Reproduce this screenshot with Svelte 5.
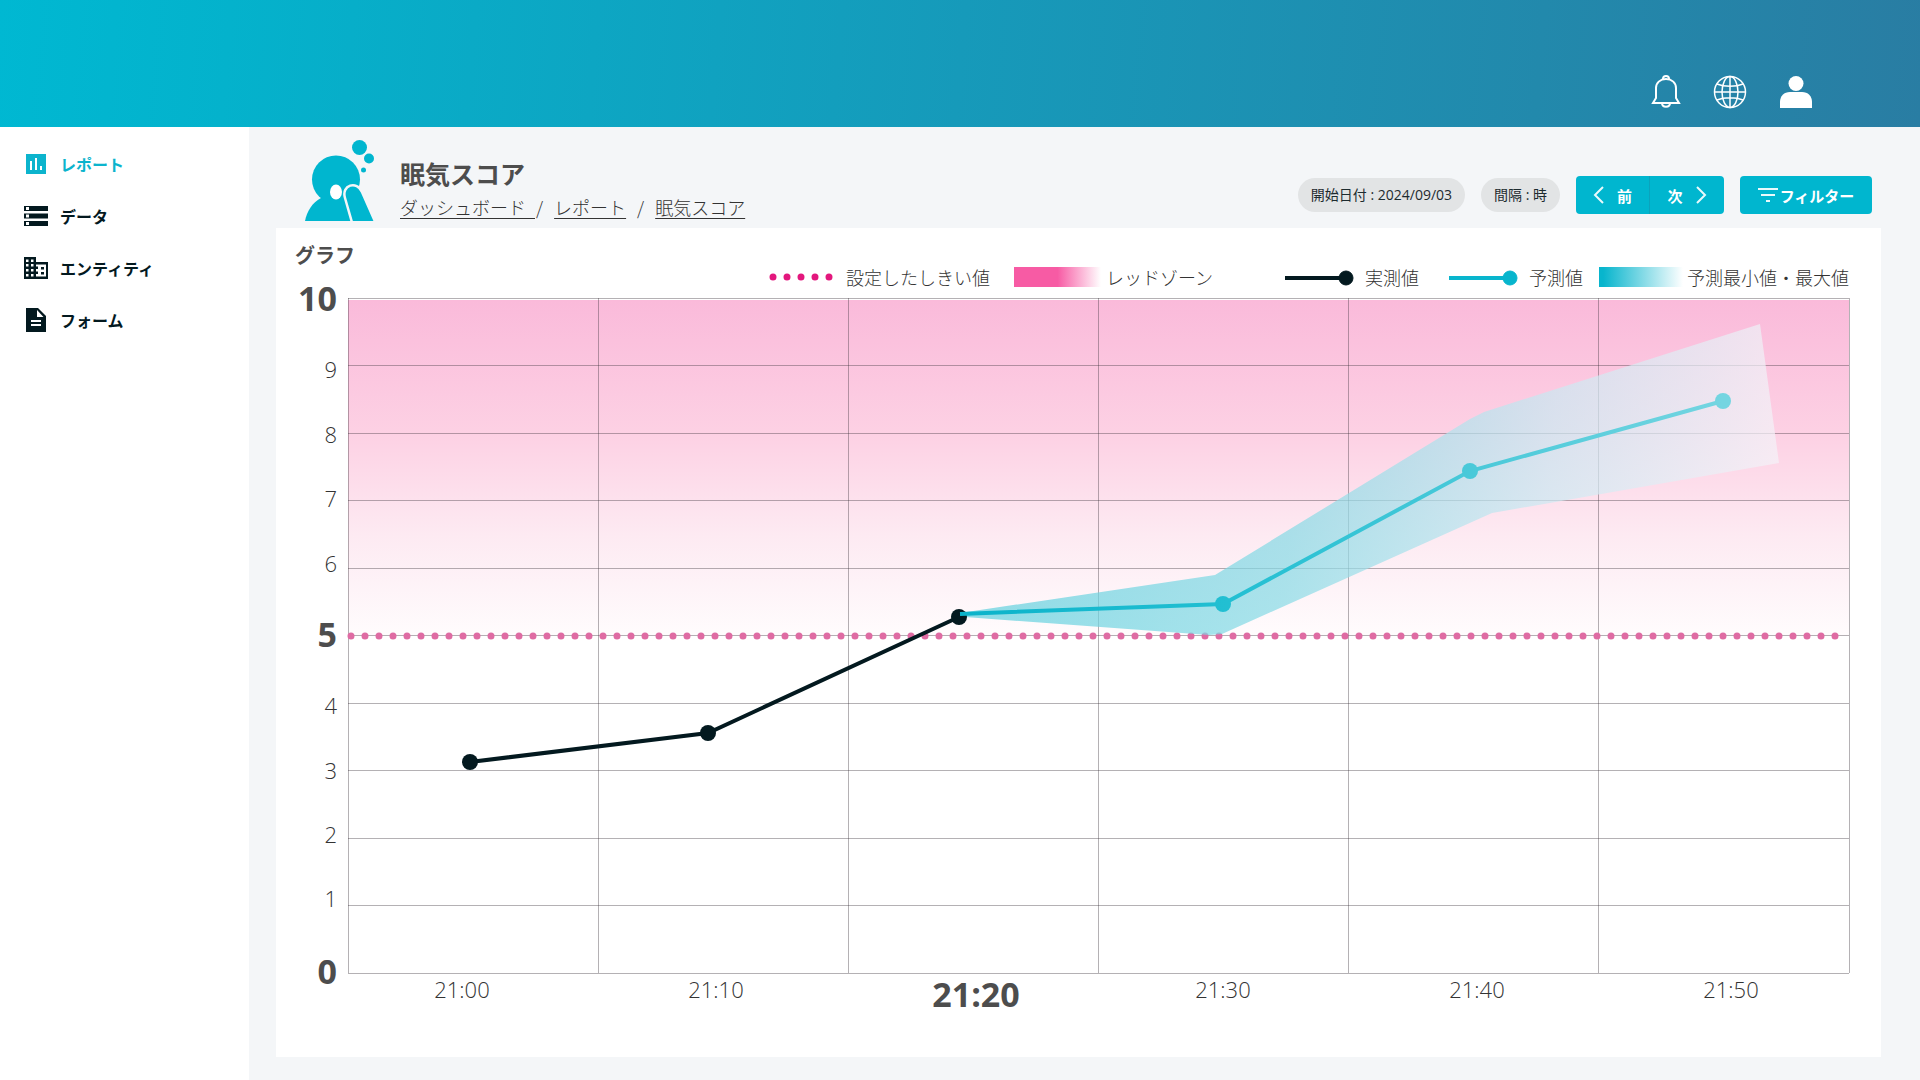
<script>
  const menu = [
    { label: 'レポート', icon: 'report', active: true },
    { label: 'データ', icon: 'data' },
    { label: 'エンティティ', icon: 'entity' },
    { label: 'フォーム', icon: 'form' },
  ];

  const icons = {
    report: 'M2 2h20v20H2zM6 9v9h2V9zm5-3v12h2V6zm5 8v4h2v-4z',
    data: 'M0 17h24v5H0zm2 1v3h3v-3zM0 2h24v5H0zm2 1v3h3V3zm-2 6.500h24v5H0zm2 1v3h3v-3z',
    entity:
      'M12 6V1H0v22h24V6zM4.500 20.500H2v-2.500h2.500zm0-5H2V13h2.500zm0-5H2V8h2.500zm0-4.500H2V3.500h2.500zm5 14.500H7v-2.500h2.500zm0-5H7V13h2.500zm0-5H7V8h2.500zm0-4.500H7V3.500h2.500zM22 20.500H12v-2.500h2v-2.500h-2V13h2v-2.500h-2V8.500h10zM20 11h-3v2.500h3zm0 5h-3v2.500h3z',
    form: 'M14 0H2v24h20V8zm3 18H7v-2h10zm0-4H7v-2h10zm-4-5V2l6.500 7z',
  };

  // plot area inside the svg
  const left = 72;
  const right = 1573;
  const top = 8;
  const bottom = 683;

  const rows = Array.from({ length: 11 }, (_, i) => Math.floor(top + (i * (bottom - top)) / 10) + 0.5);
  const cols = Array.from({ length: 7 }, (_, i) => Math.floor(left + (i * (right - left)) / 6) + 0.5);

  const yLabels = [
    { text: '10', y: 21, strong: true },
    { text: '9', y: 88 },
    { text: '8', y: 153 },
    { text: '7', y: 217 },
    { text: '6', y: 282 },
    { text: '5', y: 357, strong: true },
    { text: '4', y: 424 },
    { text: '3', y: 489 },
    { text: '2', y: 553 },
    { text: '1', y: 617 },
    { text: '0', y: 694, strong: true },
  ];

  const xLabels = [
    { text: '21:00', x: 186 },
    { text: '21:10', x: 440 },
    { text: '21:20', x: 700, strong: true },
    { text: '21:30', x: 947 },
    { text: '21:40', x: 1201 },
    { text: '21:50', x: 1455 },
  ];

  const measured = [[194, 472], [432, 443], [683, 327]];
  const predicted = [[947, 314], [1194, 181], [1447, 111]];
  const range = '684,323 939,285 1194,129 1208,122 1484,34 1503,173 1216,223 946,344 933,345 689,327';

  const toPoints = (list) => list.map((p) => p.join(',')).join(' ');
</script>

<div class="page">
  <header class="topbar">
    <button class="icon-button" aria-label="通知">
      <svg width="30" height="34" viewBox="1 0 30 34" fill="none" stroke="currentColor" stroke-width="2">
        <path d="M3 28h26l-3-5V13c0-5-4-9-10-9S6 8 6 13v10z" />
        <path d="M13 4c0-4 6-4 6 0M12 28c0 5 8 5 8 0" />
      </svg>
    </button>
    <button class="icon-button" aria-label="言語">
      <svg width="34" height="34" viewBox="0 0 34 34" fill="none" stroke="currentColor" stroke-width="1.500">
        <circle cx="17" cy="17" r="15.500" />
        <ellipse cx="17" cy="17" rx="8" ry="15.500" />
        <path d="M17 1v32M1 17h32M4 9c7 3 19 3 26 0M4 25c7-3 19-3 26 0" />
      </svg>
    </button>
    <button class="icon-button" aria-label="アカウント">
      <svg width="34" height="34" viewBox="0 0 34 34" fill="currentColor">
        <circle cx="17" cy="8.500" r="7.500" />
        <path d="M1 33v-6c0-6 4-10 10-10h12c6 0 10 4 10 10v6z" />
      </svg>
    </button>
  </header>

  <div class="body">
    <nav class="sidebar">
      {#each menu as item}
        <a href="#{item.icon}" class="menu-item" class:active={item.active}>
          <svg width="24" height="24" viewBox="0 0 24 24" fill="currentColor" fill-rule="evenodd">
            <path d={icons[item.icon]} />
          </svg>
          {item.label}
        </a>
      {/each}
    </nav>

    <main class="content">
      <div class="heading">
        <svg class="emblem" width="70" height="82" viewBox="0 0 70 82" fill="#00b6cf">
          <circle cx="54.500" cy="8.500" r="7.500" />
          <circle cx="64" cy="19.500" r="5" />
          <circle cx="58.500" cy="31" r="2.500" />
          <circle cx="31" cy="40.500" r="24" />
          <path d="M0 82c2-10 7-18 16-23h30l10 23z" />
          <path d="M48 87L40 59C36 46 52 41 57 53L72 87" stroke="#f4f6f8" stroke-width="2.500" />
          <ellipse cx="31" cy="53" rx="6" ry="7.500" fill="#fff" />
        </svg>
        <div class="titles">
          <h1>眠気スコア</h1>
          <div class="crumbs">
            <a href="#dashboard">ダッシュボード&ensp;</a><span>/</span>
            <a href="#report">レポート</a><span>/</span>
            <a href="#score">眠気スコア</a>
          </div>
        </div>

        <div class="controls">
          <span class="pill">開始日付 : 2024/09/03</span>
          <span class="pill">間隔 : 時</span>
          <div class="pager">
            <button>
              <svg width="12" height="20" viewBox="0 0 12 20"><path d="M10 2L2 10l8 8" /></svg>
              前
            </button>
            <button>
              次
              <svg width="12" height="20" viewBox="0 0 12 20"><path d="M2 2l8 8-8 8" /></svg>
            </button>
          </div>
          <button class="filter">
            <svg width="20" height="14" viewBox="0 0 20 14"><path d="M0 1h20M3 7h14M8 13h4" /></svg>
            フィルター
          </button>
        </div>
      </div>

      <section class="card">
        <div class="card-head">
          <h2>グラフ</h2>
          <ul class="legend">
            <li class="threshold">
              <svg width="66" height="20" viewBox="0 0 66 20">
                <path d="M5 10h57" stroke="#e3177d" stroke-width="7" stroke-linecap="round" stroke-dasharray="0 14" />
              </svg>
              設定したしきい値
            </li>
            <li class="zone"><i class="swatch pink"></i>レッドゾーン</li>
            <li class="actual">
              <svg width="70" height="20" viewBox="0 0 70 20" fill="#03191f" stroke="#03191f">
                <path d="M0 11h62" stroke-width="4" />
                <circle cx="61" cy="11" r="7" />
              </svg>
              実測値
            </li>
            <li class="forecast">
              <svg width="70" height="20" viewBox="0 0 70 20" fill="#08b5cd" stroke="#08b5cd">
                <path d="M0 11h62" stroke-width="4" />
                <circle cx="61" cy="11" r="7" />
              </svg>
              予測値
            </li>
            <li class="minmax"><i class="swatch teal"></i>予測最小値・最大値</li>
          </ul>
        </div>

        <svg class="chart" viewBox="0 0 1605 767">
          <defs>
            <linearGradient id="red-zone" x1="0" y1="0" x2="0" y2="1">
              <stop offset="0" stop-color="#fabada" />
              <stop offset="0.400" stop-color="#fdd1e4" />
              <stop offset="0.700" stop-color="#fdeaf2" />
              <stop offset="1" stop-color="#fffcfd" />
            </linearGradient>
            <linearGradient id="range" gradientUnits="userSpaceOnUse" x1="684" y1="230" x2="1503" y2="330">
              <stop offset="0" stop-color="#5ccfdd" stop-opacity="0.700" />
              <stop offset="0.400" stop-color="#86dae5" stop-opacity="0.700" />
              <stop offset="0.700" stop-color="#cae9f2" stop-opacity="0.700" />
              <stop offset="1" stop-color="#f8f4f9" stop-opacity="0.700" />
            </linearGradient>
            <linearGradient id="forecast" gradientUnits="userSpaceOnUse" x1="684" y1="0" x2="1447" y2="0">
              <stop offset="0" stop-color="#0bb3ca" />
              <stop offset="0.350" stop-color="#22bfd2" />
              <stop offset="0.670" stop-color="#49c9d9" />
              <stop offset="1" stop-color="#74d5e1" />
            </linearGradient>
          </defs>

          <rect x={left} y={top + 2} width={right - left} height="336" fill="url(#red-zone)" />

          <g class="grid">
            {#each rows as y}
              <line x1={left} x2={right} y1={y} y2={y} />
            {/each}
            {#each cols as x}
              <line x1={x} x2={x} y1={top} y2={bottom} />
            {/each}
          </g>

          <path class="limit" d="M75 346H1560" />
          <polygon points={range} fill="url(#range)" />
          <polyline class="series actual-line" points={toPoints(measured)} />
          {#each measured as [x, y]}
            <circle cx={x} cy={y} r="8" fill="#03191f" />
          {/each}
          <polyline class="series" stroke="url(#forecast)" points={toPoints([[684, 324], ...predicted])} />
          {#each predicted as [x, y]}
            <circle cx={x} cy={y} r="8" fill="url(#forecast)" />
          {/each}

          {#each yLabels as label}
            <text class:strong={label.strong} x="61" y={label.y} text-anchor="end">{label.text}</text>
          {/each}
          {#each xLabels as label}
            <text class:strong={label.strong} x={label.x} y={label.strong ? 717 : 708} text-anchor="middle">
              {label.text}
            </text>
          {/each}
        </svg>
      </section>
    </main>
  </div>
</div>

<style>
  :global(body) {
    background: #f4f6f8;
    font-family: 'Noto Sans CJK JP', sans-serif;
    color: #4d4d4d;
  }

  .page {
    display: flex;
    flex-direction: column;
    min-height: 100vh;
  }

  button {
    border: none;
    padding: 0;
    background: none;
    color: #fff;
    font-family: inherit;
    cursor: pointer;
  }

  .topbar {
    display: flex;
    justify-content: flex-end;
    align-items: flex-end;
    gap: 32px;
    box-sizing: border-box;
    height: 127px;
    padding: 0 107px 18px 0;
    background: linear-gradient(95deg, #00b8d2 0%, #04b2cc 12%, #169aba 50%, #2289ac 80%, #297da3 100%);
  }

  .icon-button svg {
    display: block;
  }

  .body {
    flex: 1;
    display: grid;
    grid-template-columns: 249px 1fr;
  }

  .sidebar {
    padding-top: 11px;
    background: #fff;
  }

  .menu-item {
    display: flex;
    align-items: center;
    gap: 12px;
    height: 52px;
    padding-left: 24px;
    color: #03191f;
    font-size: 16px;
    font-weight: 700;
    text-decoration: none;
  }

  .menu-item.active {
    color: #0cb4cd;
  }

  .content {
    padding: 12px 39px 23px 27px;
  }

  .heading {
    display: flex;
    padding: 0 9px 7px 29px;
  }

  .titles {
    margin-left: 25px;
    padding-top: 16px;
  }

  h1,
  h2 {
    margin: 0;
    font-weight: 700;
  }

  h1 {
    font-size: 25px;
    line-height: 36px;
  }

  .crumbs {
    display: flex;
    gap: 11px;
    padding-top: 2px;
    color: #333;
    font-size: 18px;
    font-weight: 300;
    line-height: 28px;
  }

  .crumbs a {
    color: inherit;
    text-underline-offset: 3px;
  }

  .crumbs a:first-child {
    margin-right: -10px;
  }

  .controls {
    display: flex;
    align-items: center;
    gap: 16px;
    height: 38px;
    margin-left: auto;
    padding-top: 37px;
  }

  .pill {
    padding: 0 13px;
    border-radius: 17px;
    background: #e2e4e5;
    color: #1d2b2f;
    font-family: 'Open Sans', 'Noto Sans CJK JP', sans-serif;
    font-size: 14px;
    line-height: 34px;
  }

  .pager {
    display: flex;
  }

  .pager button,
  .filter {
    display: flex;
    align-items: center;
    justify-content: center;
    gap: 12px;
    width: 74px;
    height: 38px;
    background: #00b6cf;
    font-size: 15px;
    font-weight: 700;
  }

  .pager button:first-child {
    box-sizing: border-box;
    border-right: 1px solid #0aa3bd;
    border-radius: 4px 0 0 4px;
  }

  .pager button:last-child {
    border-radius: 0 4px 4px 0;
  }

  .filter {
    gap: 2px;
    width: 132px;
    border-radius: 4px;
  }

  .controls svg {
    fill: none;
    stroke: #e9fafc;
    stroke-width: 2;
  }

  .card {
    background: #fff;
  }

  .card-head {
    display: flex;
    justify-content: space-between;
    align-items: flex-end;
    box-sizing: border-box;
    height: 62px;
    padding: 0 32px 1px 19px;
  }

  h2 {
    align-self: flex-start;
    padding-top: 12px;
    font-size: 20px;
    line-height: 30px;
  }

  .legend {
    display: flex;
    margin: 0;
    padding: 0;
    list-style: none;
    color: #333;
    font-size: 18px;
    font-weight: 300;
    line-height: 24px;
  }

  .legend li {
    display: flex;
    align-items: center;
    white-space: nowrap;
  }

  .threshold {
    gap: 12px;
  }

  .zone {
    gap: 5px;
    margin-left: 24px;
  }

  .actual {
    gap: 10px;
    margin-left: 72px;
  }

  .forecast {
    gap: 10px;
    margin-left: 30px;
  }

  .minmax {
    gap: 4px;
    margin-left: 16px;
  }

  .swatch {
    width: 87px;
    height: 20px;
  }

  .pink {
    background: linear-gradient(90deg, #f75ba4 50%, #fff);
  }

  .teal {
    width: 84px;
    background: linear-gradient(90deg, #08b5cd 5%, #fff);
  }

  .chart {
    display: block;
    width: 100%;
    overflow: visible;
  }

  .grid line {
    stroke: #3a323a;
    stroke-opacity: 0.38;
  }

  .limit {
    fill: none;
    stroke: #df6ba3;
    stroke-width: 7;
    stroke-linecap: round;
    stroke-dasharray: 0 14;
  }

  .series {
    fill: none;
    stroke-width: 4;
  }

  .actual-line {
    stroke: #03191f;
  }

  text {
    fill: #333;
    font-family: 'Open Sans', 'Noto Sans', sans-serif;
    font-size: 22px;
    font-weight: 300;
  }

  text.strong {
    fill: #4d4d4d;
    font-size: 34px;
    font-weight: 700;
  }
</style>
